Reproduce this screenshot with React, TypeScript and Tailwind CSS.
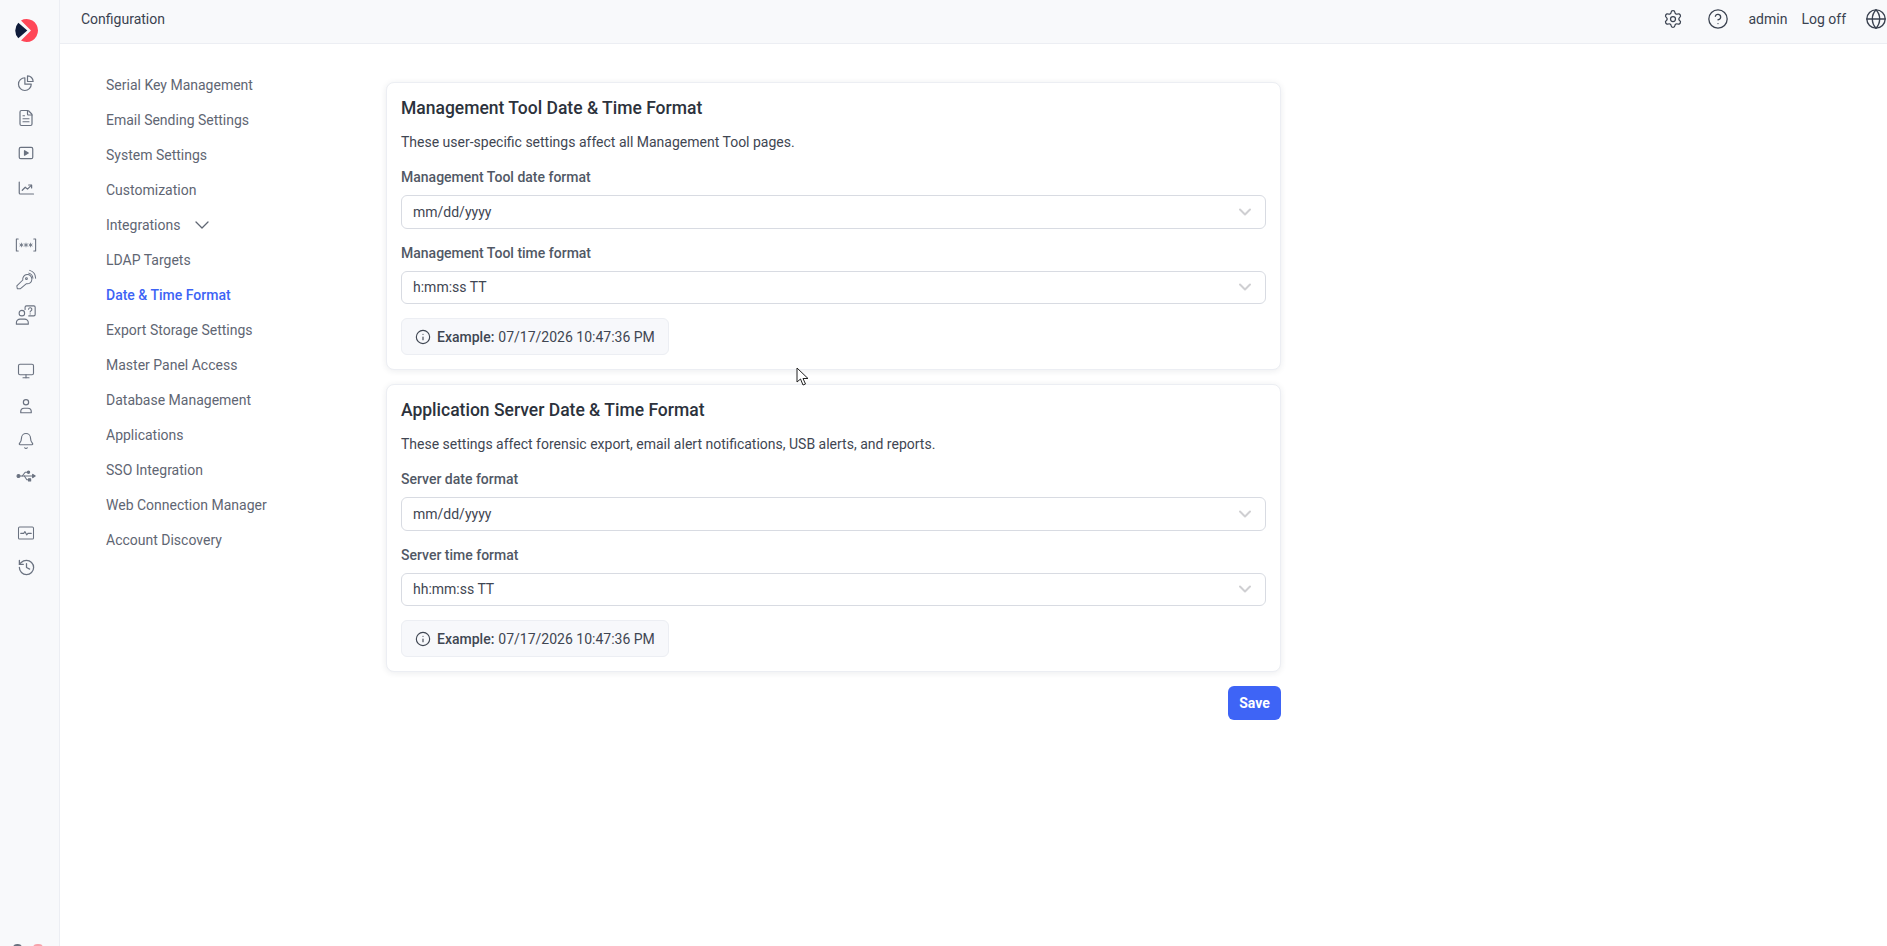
import { Bell, ChevronDown, CircleHelp, FileText, Globe, History, Info, Monitor, Settings } from 'lucide-react';

const menu = [
  'Serial Key Management',
  'Email Sending Settings',
  'System Settings',
  'Customization',
  'Integrations',
  'LDAP Targets',
  'Date & Time Format',
  'Export Storage Settings',
  'Master Panel Access',
  'Database Management',
  'Applications',
  'SSO Integration',
  'Web Connection Manager',
  'Account Discovery',
];

const iconProps = {
  width: 18,
  height: 18,
  viewBox: '0 0 24 24',
  fill: 'none',
  stroke: 'currentColor',
  strokeWidth: 1.6,
  strokeLinecap: 'round' as const,
  strokeLinejoin: 'round' as const,
};

function Logo() {
  return (
    <svg width="23" height="23" viewBox="0 0 23 23">
      <path d="M6 1.400A11.500 11.500 0 1 1 6 21.600L16 11.500Z" fill="#ff4757" />
      <path d="M3.300 3.700L12.300 11.500L3.300 19.300A11.500 11.500 0 0 1 3.300 3.700Z" fill="#0f1c3a" />
    </svg>
  );
}

function PieIcon() {
  return (
    <svg {...iconProps}>
      <path d="M10.500 5a8.500 8.500 0 1 0 8.500 8.500h-8.500z" />
      <path d="M14 2.500a7.500 7.500 0 0 1 7.500 7.500H14z" />
    </svg>
  );
}

function PlayIcon() {
  return (
    <svg {...iconProps}>
      <rect x="3" y="4.500" width="18" height="15" rx="2" />
      <path d="M10 9v6l5-3z" fill="currentColor" />
    </svg>
  );
}

function ChartIcon() {
  return (
    <svg {...iconProps}>
      <path d="M3 4v14.500a1.500 1.500 0 0 0 1.500 1.500H22" />
      <path d="M7 15l4-4 3 2.500 5-5" />
      <path d="M15.500 8H19.500V12" />
    </svg>
  );
}

function PasswordIcon() {
  return (
    <svg {...iconProps} width={22} height={22} strokeWidth={1.2}>
      <path d="M3.500 5.500H1.500v13h2" />
      <path d="M20.500 5.500h2v13h-2" />
      <path d="M7 10v4M5.300 11l3.400 2M8.700 11l-3.400 2" strokeWidth={0.9} />
      <path d="M12 10v4M10.300 11l3.400 2M13.700 11l-3.400 2" strokeWidth={0.9} />
      <path d="M17 10v4M15.300 11l3.400 2M18.700 11l-3.400 2" strokeWidth={0.9} />
    </svg>
  );
}

function KeySignalIcon() {
  return (
    <svg {...iconProps} width={22} height={22} strokeWidth={1.1}>
      <path d="M2.500 21.500 2 18.500l6.500-6.500a5 5 0 1 1 4 4L6 21.500z" />
      <circle cx="12.500" cy="10.500" r="1" />
      <path d="M15 4.500a6 6 0 0 1 4.500 5.500" />
      <path d="M16 1.500a9 9 0 0 1 6.500 8.500" />
    </svg>
  );
}

function UserQuestionIcon() {
  return (
    <svg {...iconProps} width={22} height={22} strokeWidth={1.2}>
      <circle cx="7.500" cy="10" r="3" />
      <path d="M1.500 22v-1.500a4 4 0 0 1 4-4h5a4 4 0 0 1 4 4V22z" />
      <path d="M11 6V3.500A1.500 1.500 0 0 1 12.500 2h8A1.500 1.500 0 0 1 22 3.500v8a1.500 1.500 0 0 1-1.500 1.500H15" />
      <path d="M14.800 5.800a1.800 1.800 0 1 1 2.500 1.700c-.6.3-.8.6-.8 1.200" />
      <path d="M16.500 10.800v.1" />
    </svg>
  );
}

function UserIcon() {
  return (
    <svg {...iconProps}>
      <circle cx="12" cy="7" r="3.500" />
      <path d="M5 21v-1.500A4.500 4.500 0 0 1 9.500 15h5a4.500 4.500 0 0 1 4.500 4.500V21z" />
    </svg>
  );
}

function UsbIcon() {
  return (
    <svg {...iconProps} width={20} height={20} strokeWidth={1.3}>
      <circle cx="3" cy="12" r="1.800" fill="currentColor" />
      <path d="M4 12h16" />
      <path d="M20 10l3 2-3 2z" fill="currentColor" />
      <path d="M7.500 12l3.500-4.500h2.500" />
      <circle cx="15" cy="7.500" r="1.400" fill="currentColor" />
      <path d="M10 12l3 4.500h2" />
      <rect x="15" y="15.300" width="2.600" height="2.600" fill="currentColor" />
    </svg>
  );
}

function ActivityIcon() {
  return (
    <svg {...iconProps} strokeWidth={1.4}>
      <rect x="2" y="4" width="20" height="16" rx="1.500" />
      <path d="M5 12.500h4l1.500-2.500 2.500 4.500 1.500-2h4.500" />
    </svg>
  );
}

function SideIcon({ children }: { children: React.ReactNode }) {
  return <div className="flex h-[35px] items-center justify-center">{children}</div>;
}

function Sidebar() {
  return (
    <aside className="flex w-[60px] shrink-0 flex-col overflow-hidden border-r border-[#eceef3] bg-[#f8f9fb] pr-[7px] text-[#6a7280]">
      <div className="flex h-[60px] shrink-0 items-center justify-center pt-[1px]">
        <Logo />
      </div>
      <div className="mt-[5px]">
        <SideIcon><PieIcon /></SideIcon>
        <SideIcon><FileText size={18} strokeWidth={1.6} /></SideIcon>
        <SideIcon><PlayIcon /></SideIcon>
        <SideIcon><ChartIcon /></SideIcon>
      </div>
      <div className="mt-[22px]">
        <SideIcon><PasswordIcon /></SideIcon>
        <SideIcon><KeySignalIcon /></SideIcon>
        <SideIcon><UserQuestionIcon /></SideIcon>
      </div>
      <div className="mt-[21px]">
        <SideIcon><Monitor size={18} strokeWidth={1.5} /></SideIcon>
        <SideIcon><UserIcon /></SideIcon>
        <SideIcon><Bell size={18} strokeWidth={1.5} /></SideIcon>
        <SideIcon><UsbIcon /></SideIcon>
      </div>
      <div className="mt-[22px]">
        <SideIcon><ActivityIcon /></SideIcon>
        <SideIcon><History size={19} strokeWidth={1.6} /></SideIcon>
      </div>
      <div className="mt-auto flex h-[2px] gap-[11px] pl-[13px]">
        <span className="h-[8px] w-[9px] rounded-full bg-[#6a7280]" />
        <span className="h-[8px] w-[10px] rounded-full bg-[#f7a3ab]" />
      </div>
    </aside>
  );
}

function Topbar() {
  return (
    <header className="flex h-[44px] shrink-0 items-center justify-between border-b border-[#eceef3] bg-[#f8f9fb] pb-[6px] pl-[21px] text-sm text-[#3a4250]">
      <span>Configuration</span>
      <div className="flex items-center">
        <Settings size={20} strokeWidth={1.5} className="mr-[24px]" />
        <CircleHelp size={22} strokeWidth={1.4} className="mr-[19px]" />
        <span className="mr-[14px]">admin</span>
        <span className="mr-[19px]">Log off</span>
        <Globe size={22} strokeWidth={1.5} />
      </div>
    </header>
  );
}

function ConfigNav() {
  return (
    <nav className="w-[280px] shrink-0 pl-[46px] pt-[23px] text-sm text-[#5f6673]">
      {menu.map((item) => (
        <div
          key={item}
          className={
            item === 'Date & Time Format'
              ? 'flex h-[35px] items-center font-medium text-[#3d63f5]'
              : 'flex h-[35px] items-center'
          }
        >
          {item}
          {item === 'Integrations' && <ChevronDown size={24} strokeWidth={1.3} className="ml-[10px]" />}
        </div>
      ))}
    </nav>
  );
}

function FormatSelect({ value, className }: { value: string; className: string }) {
  return (
    <div className={`flex items-center justify-between rounded-md border border-[#d8dbe2] bg-white pl-[11px] pr-[10px] text-sm text-[#3f4652] ${className}`}>
      <span>{value}</span>
      <ChevronDown size={20} strokeWidth={2.4} className="text-[#cfcfd2]" />
    </div>
  );
}

type CardProps = {
  title: string;
  description: string;
  dateLabel: string;
  dateValue: string;
  timeLabel: string;
  timeValue: string;
};

function FormatCard({ title, description, dateLabel, dateValue, timeLabel, timeValue }: CardProps) {
  return (
    <section className="h-[288px] rounded-lg border border-[#eceef3] bg-white px-[14px] shadow-[0_1px_6px_rgba(30,40,70,0.09)]">
      <h2 className="mt-[13px] flex h-[24px] items-center text-[17.5px] font-medium text-[#2c323c]">{title}</h2>
      <p className="mt-[12px] flex h-[20px] items-center text-sm text-[#3f4652]">{description}</p>
      <label className="mt-[15px] flex h-[20px] items-center text-sm font-medium text-[#515865]">{dateLabel}</label>
      <FormatSelect value={dateValue} className="mt-[8px] h-[34px]" />
      <label className="mt-[14px] flex h-[20px] items-center text-sm font-medium text-[#515865]">{timeLabel}</label>
      <FormatSelect value={timeValue} className="mt-[8px] h-[33px] pb-[1px]" />
      <div className="mt-[14px] inline-flex h-[37px] items-center rounded-md border border-[#eceef3] bg-[#f7f8fb] pl-[13px] pr-[13px] text-sm text-[#3f4652]">
        <Info size={16} strokeWidth={1.7} className="mr-[6px]" />
        <b className="mr-[4px] font-medium">Example:</b>
        07/17/2026 10:47:36 PM
      </div>
    </section>
  );
}

export default function App() {
  return (
    <div className="relative flex h-screen overflow-hidden bg-white font-['Roboto',sans-serif]">
      <Sidebar />
      <div className="flex min-w-0 flex-1 flex-col">
        <Topbar />
        <main className="flex flex-1">
          <ConfigNav />
          <div className="box-content w-[895px] shrink-0 pl-[46px] pt-[38px]">
            <div className="flex flex-col gap-[14px]">
              <FormatCard
                title="Management Tool Date & Time Format"
                description="These user-specific settings affect all Management Tool pages."
                dateLabel="Management Tool date format"
                dateValue="mm/dd/yyyy"
                timeLabel="Management Tool time format"
                timeValue="h:mm:ss TT"
              />
              <FormatCard
                title="Application Server Date & Time Format"
                description="These settings affect forensic export, email alert notifications, USB alerts, and reports."
                dateLabel="Server date format"
                dateValue="mm/dd/yyyy"
                timeLabel="Server time format"
                timeValue="hh:mm:ss TT"
              />
            </div>
            <div className="mt-[14px] flex justify-end">
              <button className="h-[34px] w-[53px] rounded-md bg-[#3e64f6] text-sm font-bold text-white">Save</button>
            </div>
          </div>
        </main>
      </div>
      {/* mouse pointer caught in the capture */}
      <svg className="absolute left-[796px] top-[367px]" width="14" height="20" viewBox="0 0 14 20">
        <path d="M1 1v14l3.500-3 2.500 6 2.500-1-2.500-5.500H12z" fill="#fff" stroke="#222" strokeWidth="1" strokeLinejoin="round" />
      </svg>
    </div>
  );
}
